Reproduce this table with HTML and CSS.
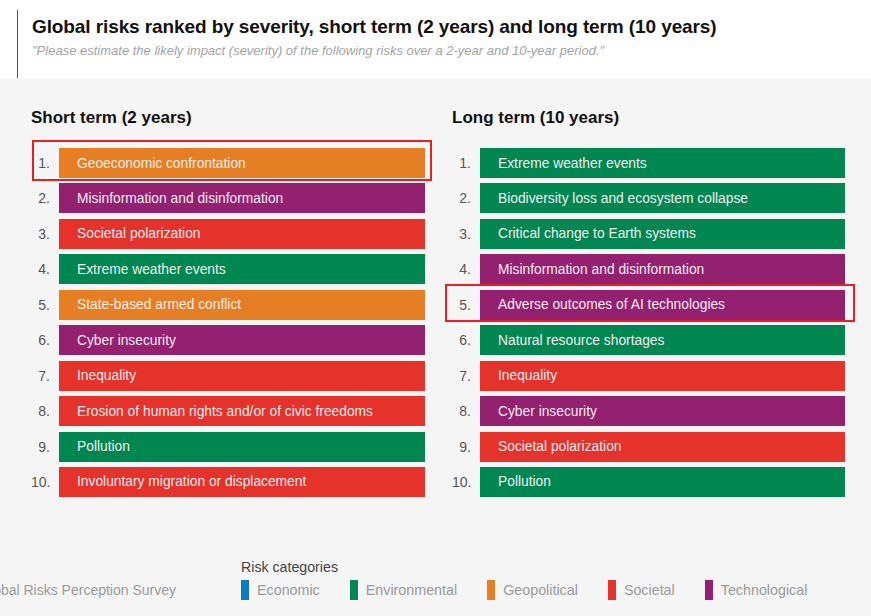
FILE: index.html
```html
<!DOCTYPE html>
<html lang="en">
<head>
<meta charset="utf-8">
<title>Global risks ranked by severity</title>
<link rel="stylesheet" href="styles.css">
</head>
<body>
<header class="header">
  <div class="header-inner">
    <h1 class="title">Global risks ranked by severity, short term (2 years) and long term (10 years)</h1>
    <p class="subtitle">"Please estimate the likely impact (severity) of the following risks over a 2-year and 10-year period."</p>
  </div>
</header>
<main class="panel">
  <div class="columns">
    <section class="column">
      <h2 class="col-title">Short term (2 years)</h2>
      <ol class="list">
        <li class="row"><span class="num">1.</span><span class="bar geo">Geoeconomic confrontation</span><span class="hl hl-left"></span></li>
        <li class="row"><span class="num">2.</span><span class="bar tech">Misinformation and disinformation</span></li>
        <li class="row"><span class="num">3.</span><span class="bar soc">Societal polarization</span></li>
        <li class="row"><span class="num">4.</span><span class="bar env">Extreme weather events</span></li>
        <li class="row"><span class="num">5.</span><span class="bar geo">State-based armed conflict</span></li>
        <li class="row"><span class="num">6.</span><span class="bar tech">Cyber insecurity</span></li>
        <li class="row"><span class="num">7.</span><span class="bar soc">Inequality</span></li>
        <li class="row"><span class="num">8.</span><span class="bar soc">Erosion of human rights and/or of civic freedoms</span></li>
        <li class="row"><span class="num">9.</span><span class="bar env">Pollution</span></li>
        <li class="row"><span class="num">10.</span><span class="bar soc">Involuntary migration or displacement</span></li>
      </ol>
    </section>
    <section class="column">
      <h2 class="col-title">Long term (10 years)</h2>
      <ol class="list">
        <li class="row"><span class="num">1.</span><span class="bar env">Extreme weather events</span></li>
        <li class="row"><span class="num">2.</span><span class="bar env">Biodiversity loss and ecosystem collapse</span></li>
        <li class="row"><span class="num">3.</span><span class="bar env">Critical change to Earth systems</span></li>
        <li class="row"><span class="num">4.</span><span class="bar tech">Misinformation and disinformation</span></li>
        <li class="row"><span class="num">5.</span><span class="bar tech">Adverse outcomes of AI technologies</span><span class="hl hl-right"></span></li>
        <li class="row"><span class="num">6.</span><span class="bar env">Natural resource shortages</span></li>
        <li class="row"><span class="num">7.</span><span class="bar soc">Inequality</span></li>
        <li class="row"><span class="num">8.</span><span class="bar tech">Cyber insecurity</span></li>
        <li class="row"><span class="num">9.</span><span class="bar soc">Societal polarization</span></li>
        <li class="row"><span class="num">10.</span><span class="bar env">Pollution</span></li>
      </ol>
    </section>
  </div>
  <footer class="footer">
    <div class="source"><span class="source-text">Source: World Economic Forum Global Risks Perception Survey</span></div>
    <div class="legend">
      <div class="legend-title">Risk categories</div>
      <ul class="legend-items">
        <li class="legend-item"><span class="swatch econ"></span>Economic</li>
        <li class="legend-item"><span class="swatch env"></span>Environmental</li>
        <li class="legend-item"><span class="swatch geo"></span>Geopolitical</li>
        <li class="legend-item"><span class="swatch soc"></span>Societal</li>
        <li class="legend-item"><span class="swatch tech"></span>Technological</li>
      </ul>
    </div>
  </footer>
</main>
</body>
</html>
```
FILE: styles.css
```css
* { box-sizing: border-box; }
html, body { margin: 0; padding: 0; }
body {
  width: 871px;
  height: 616px;
  overflow: hidden;
  font-family: "Liberation Sans", Arial, sans-serif;
  background: #f5f5f5;
}
.header {
  background: #ffffff;
  height: 78px;
  padding: 10px 0 0 17px;
}
.header-inner {
  height: 68px;
  border-left: 1px solid #555555;
  padding: 6px 0 0 14px;
}
.title {
  margin: 0;
  font-size: 19px;
  font-weight: bold;
  color: #111111;
  line-height: 22px;
  letter-spacing: -0.1px;
}
.subtitle {
  margin: 5px 0 0;
  font-size: 13px;
  font-style: italic;
  color: #a3a3a3;
  line-height: 16px;
}
.panel {
  height: 538px;
  display: flex;
  flex-direction: column;
}
.columns {
  display: grid;
  grid-template-columns: 394px 393px;
  column-gap: 27px;
  padding: 0 0 0 31px;
}
.col-title {
  margin: 29px 0 0;
  font-size: 17px;
  font-weight: bold;
  color: #111111;
  line-height: 21px;
}
.list {
  list-style: none;
  margin: 20px 0 0;
  padding: 0;
  display: flex;
  flex-direction: column;
  gap: 5.44px;
}
.row {
  position: relative;
  display: grid;
  grid-template-columns: 19px 1fr;
  column-gap: 9px;
  height: 30px;
  align-items: center;
}
.num {
  text-align: right;
  font-size: 14px;
  color: #555555;
}
.bar {
  height: 30px;
  display: flex;
  align-items: center;
  padding-left: 18px;
  font-size: 13.8px;
  color: #f3ecef;
}
.geo { background: #e67f24; }
.tech { background: #93216f; }
.soc { background: #e5322b; }
.env { background: #008751; }
.econ { background: #0a7dc2; }
.hl {
  position: absolute;
  border: 2px solid #ee1c25;
  pointer-events: none;
}
.hl-left { left: 1px; top: -8px; width: 400px; height: 41px; }
.hl-right { left: -7px; top: -6px; width: 410px; height: 38px; }
.footer {
  margin-top: auto;
  display: flex;
  align-items: flex-start;
  padding-bottom: 16px;
}
.source {
  width: 176px;
  overflow: hidden;
  display: flex;
  justify-content: flex-end;
  margin-top: 23px;
  flex-shrink: 0;
}
.source-text {
  white-space: nowrap;
  font-size: 14px;
  color: #9a9a9a;
  flex-shrink: 0;
}
.legend {
  margin-left: 65px;
}
.legend-title {
  font-size: 14.2px;
  color: #444444;
  line-height: 16px;
}
.legend-items {
  list-style: none;
  margin: 5px 0 0;
  padding: 0;
  display: flex;
  gap: 30px;
}
.legend-item {
  display: flex;
  align-items: center;
  gap: 8px;
  font-size: 14.3px;
  color: #9a9a9a;
  height: 20px;
}
.swatch {
  width: 8px;
  height: 20px;
  display: inline-block;
}
```
